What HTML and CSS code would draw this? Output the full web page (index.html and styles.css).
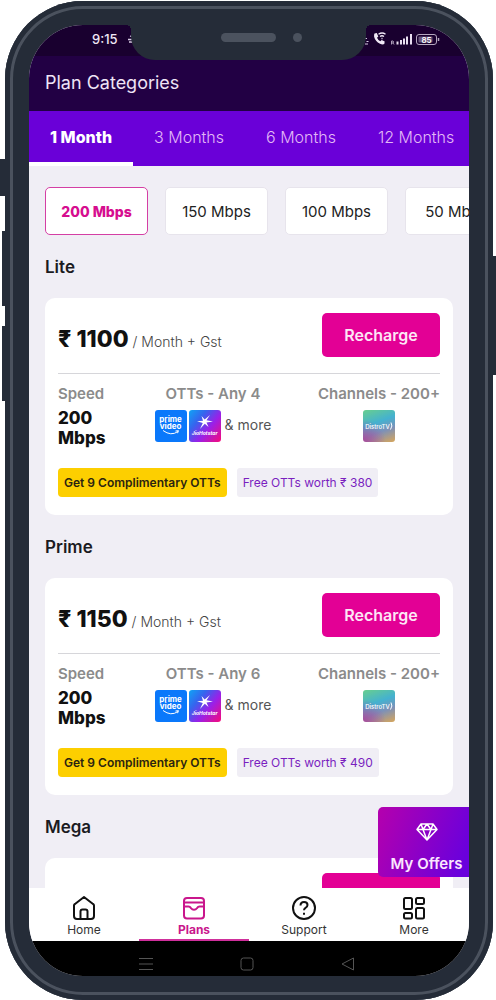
FILE: index.html
```html
<!DOCTYPE html>
<html lang="en">
<head>
    <meta charset="UTF-8">
    <meta name="viewport" content="width=device-width, initial-scale=1.0">
    <title>Plan Categories</title>
    <link rel="stylesheet" href="styles.css">
</head>
<body>
    <div class="stage">
        <div class="phone">
            <span class="side-key mute"></span>
            <span class="side-key volume-up"></span>
            <span class="side-key volume-down"></span>
            <span class="side-key power"></span>
            <div class="notch"><span class="speaker"></span><span class="camera"></span></div>

            <div class="screen">
                <div class="status-bar">
                    <span class="clock">9:15
                        <svg width="6" height="8" viewBox="0 0 6 8" aria-hidden="true"><path d="M3 1l3 1M1 4.500h5M2 7h4" stroke="#d9cde4" stroke-width="1.300"/></svg>
                    </span>
                    <svg class="status-icons" width="77" height="16" viewBox="0 0 77 16" aria-hidden="true">
                        <path d="M1 7.500h2M2.500 10.500h2M1 13h3" stroke="#d9cde4"/>
                        <path d="M10.500 2.500l2.300-.5 1.500 3.500-1.300 1.300q1 2.400 3.300 3.500l1.400-1.300 3 1.500-.4 2.500q-1.800 1-4.300-.3-4.800-2.500-5.900-7-.2-2.300.4-3.200z" fill="#f0e8f6"/>
                        <path d="M14.500 3.300q3.600-2.600 7 0M16 5.500q2-1.500 4 0M17.500 7.500h1" fill="none" stroke="#f0e8f6" stroke-width="1.300"/>
                        <path d="M27.500 13.500V10h1.500q1.300 1 0 2h-1.500M29 12l1 1.500" fill="none" stroke="#c9bdd4" stroke-width=".8"/>
                        <path d="M33.500 13.500v-3M37 13.500V9M40 13.500V7.500M43 13.500V5.500M47 13.500V3" stroke="#e8deef" stroke-width="2"/>
                        <rect x="52.500" y="3.500" width="20" height="10" rx="2.500" fill="none" stroke="#b5a8c0"/>
                        <rect x="54.500" y="5.500" width="14" height="6" rx="1" fill="#67557a"/>
                        <path d="M74.500 7v3" stroke="#b5a8c0" stroke-width="1.500"/>
                        <text x="62.500" y="11.500" class="battery-text">85</text>
                    </svg>
                </div>

                <header class="header">
                    <h1>Plan Categories</h1>
                </header>

                <nav class="tabs">
                    <button class="tab active">1 Month</button>
                    <button class="tab">3 Months</button>
                    <button class="tab">6 Months</button>
                    <button class="tab">12 Months</button>
                </nav>

                <main class="content">
                    <div class="speeds">
                        <button class="speed active">200 Mbps</button>
                        <button class="speed">150 Mbps</button>
                        <button class="speed">100 Mbps</button>
                        <button class="speed">50 Mbps</button>
                    </div>

                    <h2>Lite</h2>
                    <section class="card">
                        <div class="card-top">
                            <p class="price"><strong>₹ 1100</strong> / Month + Gst</p>
                            <button class="recharge">Recharge</button>
                        </div>
                        <div class="features">
                            <div class="feature speed-feature">
                                <h3>Speed</h3>
                                <p class="speed-value">200 Mbps</p>
                            </div>
                            <div class="feature">
                                <h3>OTTs - Any 4</h3>
                                <div class="logos">
                                    <div class="app-logo prime">
                                        prime<br>video
                                        <svg width="18" height="5" viewBox="0 0 18 5" aria-hidden="true"><path d="M1 .5q8 6 15 1M13.500 1l3-.3-1 2.500"/></svg>
                                    </div>
                                    <div class="app-logo hotstar">
                                        <svg width="18" height="16" viewBox="0 0 18 16" aria-hidden="true"><path d="M14 1l-3.500 5.200 6.500 1.300-6.500 1 2 4.500-3.700-3.200L4 15l2.800-6L1 7.300l6-.6L5.500 2l3.200 3.500z"/></svg>
                                        JioHotstar
                                    </div>
                                    <span>&amp; more</span>
                                </div>
                            </div>
                            <div class="feature">
                                <h3>Channels - 200+</h3>
                                <div class="logos">
                                    <div class="app-logo distro">DistroTV<svg width="3" height="8" viewBox="0 0 3 8" aria-hidden="true"><path d="M1 .5q2 3.500-.5 7"/></svg></div>
                                </div>
                            </div>
                        </div>
                        <div class="badges">
                            <span class="badge yellow">Get 9 Complimentary OTTs</span>
                            <span class="badge">Free OTTs worth ₹ 380</span>
                        </div>
                    </section>

                    <h2>Prime</h2>
                    <section class="card">
                        <div class="card-top">
                            <p class="price"><strong>₹ 1150</strong> / Month + Gst</p>
                            <button class="recharge">Recharge</button>
                        </div>
                        <div class="features">
                            <div class="feature speed-feature">
                                <h3>Speed</h3>
                                <p class="speed-value">200 Mbps</p>
                            </div>
                            <div class="feature">
                                <h3>OTTs - Any 6</h3>
                                <div class="logos">
                                    <div class="app-logo prime">
                                        prime<br>video
                                        <svg width="18" height="5" viewBox="0 0 18 5" aria-hidden="true"><path d="M1 .5q8 6 15 1M13.500 1l3-.3-1 2.500"/></svg>
                                    </div>
                                    <div class="app-logo hotstar">
                                        <svg width="18" height="16" viewBox="0 0 18 16" aria-hidden="true"><path d="M14 1l-3.500 5.200 6.500 1.300-6.500 1 2 4.500-3.700-3.200L4 15l2.800-6L1 7.300l6-.6L5.500 2l3.200 3.500z"/></svg>
                                        JioHotstar
                                    </div>
                                    <span>&amp; more</span>
                                </div>
                            </div>
                            <div class="feature">
                                <h3>Channels - 200+</h3>
                                <div class="logos">
                                    <div class="app-logo distro">DistroTV<svg width="3" height="8" viewBox="0 0 3 8" aria-hidden="true"><path d="M1 .5q2 3.500-.5 7"/></svg></div>
                                </div>
                            </div>
                        </div>
                        <div class="badges">
                            <span class="badge yellow">Get 9 Complimentary OTTs</span>
                            <span class="badge">Free OTTs worth ₹ 490</span>
                        </div>
                    </section>

                    <h2>Mega</h2>
                    <section class="card">
                        <div class="card-top">
                            <button class="recharge" aria-label="Recharge"></button>
                        </div>
                    </section>
                </main>

                <button class="offers">
                    <svg width="22" height="20" viewBox="0 0 22 20" fill="none" stroke="#fff" stroke-width="1.500" stroke-linejoin="round" aria-hidden="true">
                        <path d="M5 2h12l4 5.500L11 18 1 7.500zM1 7.500h20M5 2l2 5.500L11 18l4-10.500L17 2M7 7.500L11 2l4 5.500"/>
                    </svg>
                    My Offers
                </button>

                <nav class="bottom-nav">
                    <a href="#" class="nav-item">
                        <svg viewBox="0 0 26 26" aria-hidden="true"><path d="M3 10.500Q3 9.500 4 9l9-7 9 7q1 .5 1 1.500V21q0 3-3 3H6q-3 0-3-3zM9.500 24v-7.500q0-2 2-2h3q2 0 2 2V24"/></svg>
                        Home
                    </a>
                    <a href="#" class="nav-item active">
                        <svg viewBox="0 0 26 26" aria-hidden="true"><rect x="3" y="3" width="20" height="20.500" rx="3"/><path d="M3 7.500h20M3 11.500h4.500q1.500 0 2.200 1.300 3.300 4 6.600 0 .7-1.300 2.200-1.300H23"/></svg>
                        Plans
                    </a>
                    <a href="#" class="nav-item">
                        <svg viewBox="0 0 26 26" aria-hidden="true"><circle cx="13" cy="13" r="11"/><path d="M9.500 10.500q0-3.500 3.500-3.500t3.500 3q0 1.800-2 2.800-1.500.9-1.500 2.400M13 17.700v2"/></svg>
                        Support
                    </a>
                    <a href="#" class="nav-item">
                        <svg viewBox="0 0 26 26" aria-hidden="true"><rect x="3" y="3" width="8" height="11" rx="1.500"/><rect x="15" y="3" width="8" height="6" rx="1.500"/><rect x="3" y="18" width="8" height="5.500" rx="1.500"/><rect x="15" y="13" width="8" height="10.500" rx="1.500"/></svg>
                        More
                    </a>
                </nav>

                <div class="system-bar">
                    <svg width="14" height="14" viewBox="0 0 14 14" aria-hidden="true"><path d="M0 1.500h14M0 7h14M0 12.500h14"/></svg>
                    <svg width="14" height="14" viewBox="0 0 14 14" aria-hidden="true"><rect x="1" y="1" width="12" height="12" rx="2.500"/></svg>
                    <svg width="14" height="14" viewBox="0 0 14 14" aria-hidden="true"><path d="M1 7l11.500-6v12z"/></svg>
                </div>
            </div>
        </div>
    </div>
</body>
</html>
```
FILE: styles.css
```css
:root {
    --shell: #252c38;
    --shell-line: #4b525e;
    --dark: #220044;
    --purple: #6a00d8;
    --pink: #e30095;
    --background: #f0eef5;
}

* {
    margin: 0;
    padding: 0;
    box-sizing: border-box;
    font-family: Inter, 'Noto Sans', sans-serif;
}

body {
    background: #fff;
}

button {
    border: none;
    cursor: pointer;
}

/* Phone */
.stage {
    height: 100vh;
    padding: 1px 3px 0 5px;
    overflow: hidden;
}

.phone {
    position: relative;
    height: 100%;
    padding: 24px;
    border-radius: 78px;
    background: var(--shell);
    box-shadow: inset 0 0 0 5px var(--shell), inset 0 0 0 8px var(--shell-line);
}

.side-key {
    position: absolute;
    left: -3px;
    width: 4px;
    height: 75px;
    background: var(--shell);
}

.mute {
    top: 158px;
    left: -5px;
    width: 6px;
    height: 37px;
}

.volume-up {
    top: 230px;
}

.volume-down {
    top: 325px;
}

.power {
    top: 255px;
    left: auto;
    right: -3px;
    height: 119px;
}

.notch {
    position: absolute;
    z-index: 2;
    top: 20px;
    left: 126px;
    right: 127px;
    height: 39px;
    border-radius: 0 0 24px 24px;
    background: var(--shell);
}

/* Small curves where the notch meets the top edge */
.notch::before,
.notch::after {
    content: "";
    position: absolute;
    top: 4px;
    left: -5px;
    width: 5px;
    height: 5px;
    background: radial-gradient(circle at 0 100%, transparent 5px, var(--shell) 5px);
}

.notch::after {
    left: auto;
    right: -5px;
    background: radial-gradient(circle at 100% 100%, transparent 5px, var(--shell) 5px);
}

.speaker,
.camera {
    position: absolute;
    top: 12px;
    height: 9px;
    border-radius: 5px;
    background: var(--shell-line);
}

.speaker {
    left: 90px;
    width: 55px;
}

.camera {
    left: 162px;
    width: 9px;
}

.screen {
    position: relative;
    display: flex;
    flex-direction: column;
    height: 100%;
    border-radius: 54px;
    overflow: hidden;
    background: var(--background);
}

/* Top bars */
.status-bar {
    display: flex;
    justify-content: space-between;
    align-items: center;
    height: 31px;
    padding: 0 28px 3px 63px;
    background: #19002f;
}

.clock {
    display: flex;
    align-items: center;
    gap: 9px;
    color: #f0e8f6;
    font-size: 13px;
    font-weight: 500;
}

.battery-text {
    fill: #fff;
    font-size: 8px;
    font-weight: 600;
    text-anchor: middle;
}

.header {
    padding: 13px 16px 15px;
    background: var(--dark);
}

.header h1 {
    color: #efe4f6;
    font-size: 18px;
    font-weight: 400;
    line-height: 27px;
}

.tabs {
    display: flex;
    flex-shrink: 0;
    height: 55px;
    overflow: hidden;
    background: var(--purple);
}

.tab {
    flex-shrink: 0;
    padding: 0 21px;
    border-bottom: 4px solid transparent;
    background: none;
    color: #e2b8f6;
    font-size: 16px;
    font-weight: 300;
}

.tab.active {
    border-color: #fff;
    color: #fff;
    font-weight: 800;
}

/* Plans */
.content {
    flex: 1;
    min-height: 0;
    padding: 21px 16px 0;
    overflow: hidden;
}

.speeds {
    display: flex;
    gap: 17px;
    margin-right: -16px;
    overflow: hidden;
}

.speed {
    flex: 0 0 103px;
    height: 48px;
    border: 1px solid #e7e4ec;
    border-radius: 5px;
    background: #fff;
    color: #222;
    font-size: 15px;
}

.speed.active {
    border-color: #d43fa4;
    color: #d60d8f;
    font-size: 14px;
    font-weight: 800;
}

.content h2 {
    padding: 20px 0 19px;
    color: #1b1b1f;
    font-size: 17px;
    font-weight: 600;
    line-height: 24px;
}

.card {
    padding: 15px 13px 18px;
    border-radius: 10px;
    background: #fff;
}

.card-top {
    display: flex;
    justify-content: space-between;
    align-items: center;
    padding-bottom: 16px;
    border-bottom: 1px solid #d6d6da;
}

.price {
    padding-top: 10px;
    color: #444;
    font-size: 14px;
    font-weight: 300;
    line-height: 28px;
}

.price strong {
    color: #111;
    font-size: 23px;
    font-weight: 800;
}

.recharge {
    width: 118px;
    height: 44px;
    margin-left: auto;
    border-radius: 5px;
    background: var(--pink);
    color: #fde6f5;
    font-size: 16px;
    font-weight: 600;
}

.features {
    display: flex;
    justify-content: space-between;
    padding-top: 10px;
}

.feature {
    text-align: center;
}

.feature h3 {
    color: #8b8b8b;
    font-size: 15px;
    font-weight: 600;
    line-height: 20px;
}

.speed-feature {
    width: 50px;
    text-align: left;
}

.speed-value {
    padding-top: 4px;
    color: #111;
    font-size: 17px;
    font-weight: 800;
    line-height: 20px;
}

.logos {
    display: flex;
    justify-content: center;
    align-items: center;
    gap: 2px;
    padding-top: 6px;
    color: #555;
    font-size: 14px;
}

.logos span {
    padding: 0 0 3px 2px;
}

.app-logo {
    width: 32px;
    height: 32px;
    border-radius: 3px;
    color: #fff;
    text-align: center;
    white-space: nowrap;
}

.app-logo svg {
    display: block;
    margin: 0 auto;
    fill: none;
    stroke: #fff;
}

.prime {
    padding-top: 6px;
    background: #0a78fb;
    font-size: 8px;
    font-weight: 700;
    line-height: 7px;
}

.hotstar {
    padding-top: 4px;
    background: linear-gradient(130deg, #0fa4f5, #3565ee 30%, #9a20e8 60%, #f80a78);
    font-size: 5px;
    font-style: italic;
    font-weight: 700;
    line-height: 7px;
}

.hotstar svg {
    fill: #fff;
    stroke: none;
}

.distro {
    display: flex;
    justify-content: center;
    align-items: center;
    background:
        radial-gradient(circle at 0 100%, #a84b9c, transparent 50%),
        linear-gradient(160deg, #68cf8e, #44b1d0 40%, #7d91b8 65%, #d8a65a);
    font-size: 6px;
    font-weight: 500;
}

.distro svg {
    margin: 0;
}

.badges {
    display: flex;
    gap: 10px;
    padding-top: 20px;
}

.badge {
    padding: 0 6px;
    border-radius: 3px;
    background: var(--background);
    color: #7a1fc0;
    font-size: 12px;
    line-height: 29px;
    white-space: nowrap;
}

.badge.yellow {
    border-radius: 4px;
    background: #fdcf00;
    color: #2b2410;
    font-weight: 600;
}

/* Floating button */
.offers {
    position: absolute;
    right: 0;
    bottom: 99px;
    display: flex;
    flex-direction: column;
    align-items: center;
    gap: 12px;
    width: 91px;
    height: 70px;
    padding-top: 15px;
    padding-left: 6px;
    border-radius: 5px 0 0 5px;
    background: linear-gradient(110deg, #b500ad, #6a00dc 90%);
    color: #fbe6ff;
    font-size: 15px;
    font-weight: 600;
    white-space: nowrap;
}

/* Bottom bars */
.bottom-nav {
    display: flex;
    height: 53px;
    background: #fff;
}

.nav-item {
    flex: 1;
    display: flex;
    flex-direction: column;
    align-items: center;
    padding-top: 7px;
    border-bottom: 2px solid transparent;
    color: #333;
    font-size: 12px;
    line-height: 16px;
    text-decoration: none;
}

.nav-item svg {
    width: 26px;
    height: 26px;
    margin-bottom: 1px;
    fill: none;
    stroke: #111;
    stroke-width: 2;
    stroke-linejoin: round;
}

.nav-item.active {
    border-color: #cf2f9b;
    color: #c9168c;
    font-weight: 700;
}

.nav-item.active svg {
    stroke: #c9168c;
}

.system-bar {
    display: flex;
    justify-content: center;
    gap: 87px;
    height: 35px;
    padding: 16px 4px 0 0;
    background: #000;
}

.system-bar svg {
    fill: none;
    stroke: #555;
}
```
